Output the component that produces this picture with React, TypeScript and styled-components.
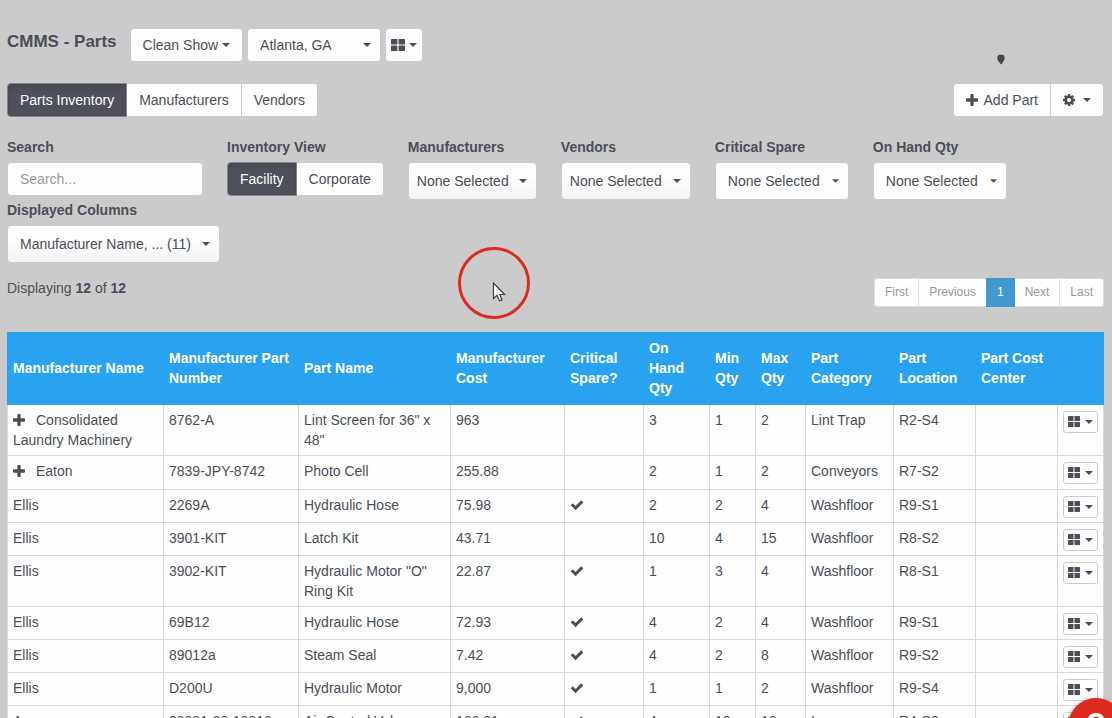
import React from "react";
import styled, { createGlobalStyle, css } from "styled-components";

const ink = "#4a4e59";
const page = "#cbcbcb";

const GlobalStyle = createGlobalStyle`
  * { box-sizing: border-box; }
  html { scrollbar-width: none; }
  body {
    margin: 0;
    background: ${page};
    color: ${ink};
    font: 14px/20px "Liberation Sans", Arial, sans-serif;
  }
  button, input, select { font: inherit; color: inherit; }
`;

const Page = styled.main`
  padding: 28px 8px 0 7px;
`;

const Bar = styled.header`
  display: flex;
  align-items: flex-start;
  gap: 4px;
`;

const Title = styled.h1`
  margin: 4px 9px 0 0;
  font-size: 17px;
  line-height: 20px;
`;

const control = css`
  height: 34px;
  border: 1px solid #ccc;
  border-radius: 4px;
  background: #fefefe;
  white-space: nowrap;
`;

const Button = styled.button<{ $tight?: boolean }>`
  ${control}
  display: inline-flex;
  align-items: center;
  justify-content: center;
  gap: 4px;
  padding: 0 ${(p) => (p.$tight ? 5 : 12)}px;
`;

const Actions = styled.div`
  display: flex;
  justify-content: space-between;
  margin-top: 21px;
`;

const Group = styled.div`
  display: flex;
`;

const GroupButton = styled.button<{ $active?: boolean; $gap?: number }>`
  ${control}
  display: inline-flex;
  align-items: center;
  gap: ${(p) => p.$gap ?? 0}px;
  padding: 0 12px;
  border-radius: 0;
  & + & { margin-left: -1px; }
  &:first-child { border-radius: 4px 0 0 4px; }
  &:last-child { border-radius: 0 4px 4px 0; }
  ${(p) =>
    p.$active &&
    css`
      position: relative;
      z-index: 1;
      color: #fff;
      background: #4e505b;
      border-color: #85868d;
      box-shadow: inset 0 3px 5px rgba(0, 0, 0, 0.125);
    `}
`;

const Filters = styled.form`
  display: flex;
  flex-wrap: wrap;
  column-gap: 24px;
  margin-top: 20px;
`;

const Field = styled.div`
  display: flex;
  flex-direction: column;
  align-items: flex-start;
  gap: 5px;
`;

const Label = styled.label`
  font-weight: bold;
`;

const SearchInput = styled.input`
  ${control}
  width: 196px;
  padding: 0 12px;
  &::placeholder { color: #999; opacity: 1; }
`;

const SelectBox = styled.div<{ $w: number }>`
  display: grid;
  width: ${(p) => p.$w}px;
  align-items: center;
  & > * { grid-area: 1 / 1; }
  & > svg { justify-self: end; margin-right: 10px; pointer-events: none; }
`;

const Select = styled.select<{ $tall?: boolean; $shade?: boolean; $pad?: number }>`
  ${control}
  appearance: none;
  width: 100%;
  height: ${(p) => (p.$tall ? 38 : 34)}px;
  padding: 0 ${(p) => p.$pad ?? 12}px;
  ${(p) => p.$shade && css`background: linear-gradient(#fefefe 30%, #f4f4f5);`}
`;

const Summary = styled.div`
  display: flex;
  justify-content: space-between;
  align-items: flex-start;
  margin: 15px 0 25px;
`;

const Pages = styled.ul`
  display: flex;
  margin: 0;
  padding: 0;
  list-style: none;
  font-size: 12px;
  line-height: 17px;
`;

const PageLink = styled.a<{ $active?: boolean }>`
  display: block;
  padding: 5px 10px;
  border: 1px solid #ddd;
  background: #fefefe;
  color: #999;
  text-decoration: none;
  li + li > & { margin-left: -1px; }
  li:first-child > & { border-radius: 3px 0 0 3px; }
  li:last-child > & { border-radius: 0 3px 3px 0; }
  ${(p) =>
    p.$active &&
    css`
      position: relative;
      color: #fff;
      background: #4298cf;
      border-color: #4298cf;
    `}
`;

const Table = styled.table`
  width: 100%;
  table-layout: fixed;
  border-collapse: separate;
  border-spacing: 0;
  background: #fefefe;
`;

const Col = styled.col<{ $w: number }>`
  width: ${(p) => p.$w}px;
`;

const Th = styled.th`
  height: 73px;
  padding: 5px 5px 7px;
  background: #29a3ef;
  color: #fff;
  text-align: left;
  vertical-align: middle;
  &:first-child { padding-left: 6px; }
`;

const Tr = styled.tr<{ $expandable?: boolean }>`
  height: ${(p) => (p.$expandable ? 34 : 33)}px;
`;

const Td = styled.td`
  padding: 5px;
  border: solid #d9d9d9;
  border-width: 0 1px 1px 0;
  vertical-align: top;
  &:first-child { border-left-width: 1px; }
  &:last-child { padding-bottom: 4px; }
`;

const Expand = styled.button`
  margin: 0 11px 0 0;
  padding: 0;
  border: 0;
  background: none;
  line-height: 12px;
  & > svg { vertical-align: -1px; }
`;

const RowMenu = styled.button`
  display: flex;
  align-items: center;
  justify-content: center;
  gap: 5px;
  width: 35px;
  height: 22px;
  margin-top: 1px;
  padding: 0 0 1px;
  border: 1px solid #ccc;
  border-radius: 3px;
  background: #fefefe;
`;

const Check = styled.svg`
  display: block;
  margin-top: 3px;
`;

const PinMark = styled.svg`
  position: absolute;
  top: 54px;
  left: 997px;
`;

const ClickRing = styled.div`
  position: absolute;
  top: 247px;
  left: 458px;
  width: 72px;
  height: 72px;
  border: 3px solid #dc2b20;
  border-radius: 50%;
  pointer-events: none;
`;

const Pointer = styled.svg`
  position: absolute;
  top: 32px;
  left: 31px;
`;

const Help = styled.button`
  position: fixed;
  right: -12px;
  bottom: -36px;
  width: 56px;
  height: 56px;
  padding: 0 0 4px;
  border: 0;
  border-radius: 50%;
  background: #dc2b20;
  color: #fff;
  font-size: 32px;
  font-weight: bold;
  line-height: 48px;
  box-shadow: 0 1px 5px rgba(0, 0, 0, 0.3);
`;

const Caret = ({ w = 8 }: { w?: number }) => (
  <svg width={w} height="4" viewBox="0 0 8 4" fill={ink} aria-hidden="true">
    <path d="M0 0h8L4 4z" />
  </svg>
);

const GridIcon = ({ w = 12, h = 11 }: { w?: number; h?: number }) => (
  <svg width={w} height={h} viewBox="0 0 12 11" preserveAspectRatio="none" fill={ink} aria-hidden="true">
    <rect width="5.500" height="5" rx=".4" />
    <rect x="6.500" width="5.500" height="5" rx=".4" />
    <rect y="6" width="5.500" height="5" rx=".4" />
    <rect x="6.500" y="6" width="5.500" height="5" rx=".4" />
  </svg>
);

const PlusIcon = () => (
  <svg width="12" height="12" viewBox="0 0 11 11" fill={ink} aria-hidden="true">
    <path d="M4.700 0h1.600q.7 0 .7.7V4h3.300q.7 0 .7.7v1.600q0 .7-.7.7H7v3.300q0 .7-.7.7H4.700q-.7 0-.7-.7V7H.7Q0 7 0 6.300V4.700Q0 4 .7 4H4V.7q0-.7.7-.7z" />
  </svg>
);

const GearIcon = () => (
  <svg width="12" height="12" viewBox="0 0 1536 1536" fill={ink} aria-hidden="true">
    <path d="M1024 768q0-106-75-181t-181-75-181 75-75 181 75 181 181 75 181-75 75-181zm512-109v222q0 12-8 23t-20 13l-185 28q-19 54-39 91 35 50 107 138 10 12 10 25t-9 23q-27 37-99 108t-94 71q-12 0-26-9l-138-108q-44 23-91 38-16 136-29 186-7 28-36 28H657q-14 0-24.500-8.500T621 1506l-28-184q-49-16-90-37l-141 107q-10 9-25 9-14 0-25-11-126-114-165-168-7-10-7-23 0-12 8-23 15-21 51-66.500t54-70.500q-27-50-41-99L29 913q-13-2-21-12.500T0 877V655q0-12 8-23t19-13l186-28q14-46 39-92-40-57-107-138-10-12-10-24 0-10 9-23 26-36 98.500-107.500T337 135q13 0 26 10l138 107q44-23 91-38 16-136 29-186 7-28 36-28h222q14 0 24.500 8.500T915 30l28 184q49 16 90 37l142-107q9-9 24-9 13 0 25 10 129 119 165 170 7 8 7 22 0 12-8 23-15 21-51 66.500t-54 70.500q26 50 41 98l183 28q13 2 21 12.500t8 23.500z" />
  </svg>
);

const CheckIcon = () => (
  <Check width="14" height="14" viewBox="0 0 1792 1792" fill={ink} role="img" aria-label="Yes">
    <path d="M1671 566q0 40-28 68l-724 724-136 136q-28 28-68 28t-68-28l-136-136-362-362q-28-28-28-68t28-68l136-136q28-28 68-28t68 28l294 295 656-657q28-28 68-28t68 28l136 136q28 28 28 68z" />
  </Check>
);

const columns: [string, number][] = [
  ["Manufacturer Name", 157],
  ["Manufacturer Part Number", 135],
  ["Part Name", 152],
  ["Manufacturer Cost", 114],
  ["Critical Spare?", 79],
  ["On Hand Qty", 66],
  ["Min Qty", 46],
  ["Max Qty", 50],
  ["Part Category", 88],
  ["Part Location", 82],
  ["Part Cost Center", 82],
  ["", 46],
];

type Part = {
  maker: string;
  number: string;
  name: string;
  cost: string;
  critical?: boolean;
  qty: [number, number, number];
  category: string;
  location: string;
  expandable?: boolean;
};

const parts: Part[] = [
  { maker: "Consolidated Laundry Machinery", number: "8762-A", name: 'Lint Screen for 36" x 48"', cost: "963", qty: [3, 1, 2], category: "Lint Trap", location: "R2-S4", expandable: true },
  { maker: "Eaton", number: "7839-JPY-8742", name: "Photo Cell", cost: "255.88", qty: [2, 1, 2], category: "Conveyors", location: "R7-S2", expandable: true },
  { maker: "Ellis", number: "2269A", name: "Hydraulic Hose", cost: "75.98", critical: true, qty: [2, 2, 4], category: "Washfloor", location: "R9-S1" },
  { maker: "Ellis", number: "3901-KIT", name: "Latch Kit", cost: "43.71", qty: [10, 4, 15], category: "Washfloor", location: "R8-S2" },
  { maker: "Ellis", number: "3902-KIT", name: 'Hydraulic Motor "O" Ring Kit', cost: "22.87", critical: true, qty: [1, 3, 4], category: "Washfloor", location: "R8-S1" },
  { maker: "Ellis", number: "69B12", name: "Hydraulic Hose", cost: "72.93", critical: true, qty: [4, 2, 4], category: "Washfloor", location: "R9-S1" },
  { maker: "Ellis", number: "89012a", name: "Steam Seal", cost: "7.42", critical: true, qty: [4, 2, 8], category: "Washfloor", location: "R9-S2" },
  { maker: "Ellis", number: "D200U", name: "Hydraulic Motor", cost: "9,000", critical: true, qty: [1, 1, 2], category: "Washfloor", location: "R9-S4" },
  { maker: "Ace", number: "39081-68-10810", name: "Air Control Valve", cost: "166.31", critical: true, qty: [4, 10, 10], category: "Ironer", location: "R4-S2" },
];

type DropProps = { id: string; label: string; value: string; w: number; shade?: boolean; pad?: number; caret?: number };

const DropField = ({ id, label, value, w, shade, pad, caret }: DropProps) => (
  <Field>
    <Label htmlFor={id}>{label}</Label>
    <SelectBox $w={w}>
      <Select id={id} $tall $shade={shade} $pad={pad}>
        <option>{value}</option>
      </Select>
      <Caret w={caret} />
    </SelectBox>
  </Field>
);

export default function App() {
  return (
    <Page>
      <GlobalStyle />
      <Bar>
        <Title>CMMS - Parts</Title>
        <Button>
          Clean Show <Caret />
        </Button>
        <SelectBox $w={134}>
          <Select aria-label="Facility">
            <option>Atlanta, GA</option>
          </Select>
          <Caret />
        </SelectBox>
        <Button $tight aria-label="Modules">
          <GridIcon w={14} h={12} />
          <Caret />
        </Button>
      </Bar>

      <Actions>
        <Group>
          <GroupButton $active>Parts Inventory</GroupButton>
          <GroupButton>Manufacturers</GroupButton>
          <GroupButton>Vendors</GroupButton>
        </Group>
        <Group>
          <GroupButton $gap={6}>
            <PlusIcon />
            Add Part
          </GroupButton>
          <GroupButton $gap={8} aria-label="Settings">
            <GearIcon />
            <Caret />
          </GroupButton>
        </Group>
      </Actions>

      <Filters onSubmit={(e) => e.preventDefault()}>
        <Field>
          <Label htmlFor="search">Search</Label>
          <SearchInput id="search" type="text" placeholder="Search..." />
        </Field>
        <Field role="group" aria-labelledby="view">
          <Label as="span" id="view">Inventory View</Label>
          <Group>
            <GroupButton type="button" $active>Facility</GroupButton>
            <GroupButton type="button">Corporate</GroupButton>
          </Group>
        </Field>
        <DropField id="makers" label="Manufacturers" value="None Selected" w={129} shade pad={8} />
        <DropField id="vendors" label="Vendors" value="None Selected" w={130} shade pad={8} />
        <DropField id="critical" label="Critical Spare" value="None Selected" w={134} caret={7} />
        <DropField id="onhand" label="On Hand Qty" value="None Selected" w={134} caret={7} />
        <DropField id="columns" label="Displayed Columns" value="Manufacturer Name, ... (11)" w={213} shade />
      </Filters>

      <Summary>
        <div>
          Displaying <b>12</b> of <b>12</b>
        </div>
        <nav aria-label="Pages">
          <Pages>
            {["First", "Previous", "1", "Next", "Last"].map((t) => (
              <li key={t}>
                <PageLink href="#" $active={t === "1"}>{t}</PageLink>
              </li>
            ))}
          </Pages>
        </nav>
      </Summary>

      <Table>
        <colgroup>
          {columns.map(([name, w]) => (
            <Col key={name} $w={w} />
          ))}
        </colgroup>
        <thead>
          <tr>
            {columns.map(([name]) => (
              <Th key={name} scope="col">{name}</Th>
            ))}
          </tr>
        </thead>
        <tbody>
          {parts.map((p) => (
            <Tr key={p.number} $expandable={p.expandable}>
              <Td>
                {p.expandable && (
                  <Expand aria-label="Expand">
                    <PlusIcon />
                  </Expand>
                )}
                {p.maker}
              </Td>
              <Td>{p.number}</Td>
              <Td>{p.name}</Td>
              <Td>{p.cost}</Td>
              <Td>{p.critical && <CheckIcon />}</Td>
              {p.qty.map((q, i) => (
                <Td key={i}>{q}</Td>
              ))}
              <Td>{p.category}</Td>
              <Td>{p.location}</Td>
              <Td />
              <Td>
                <RowMenu aria-label="Row actions">
                  <GridIcon />
                  <Caret />
                </RowMenu>
              </Td>
            </Tr>
          ))}
        </tbody>
      </Table>

      <PinMark width="8" height="11" viewBox="0 0 8 11" fill="#45474d" aria-hidden="true">
        <path d="M2 .8h4L7.600 2.500v3L6 8 4.600 10.200H3.800L2 8 .4 5.500v-3z" />
      </PinMark>
      <ClickRing aria-hidden="true">
        <Pointer width="14" height="20" viewBox="0 0 14 20" fill="#fff" stroke="#3d3f4a" strokeWidth="1.200">
          <path d="M1.500 1v15.500l3.500-3.300 2.400 5.300q1 .6 2.500-.8L7.700 12.500h4.800z" />
        </Pointer>
      </ClickRing>
      <Help aria-label="Help">?</Help>
    </Page>
  );
}
